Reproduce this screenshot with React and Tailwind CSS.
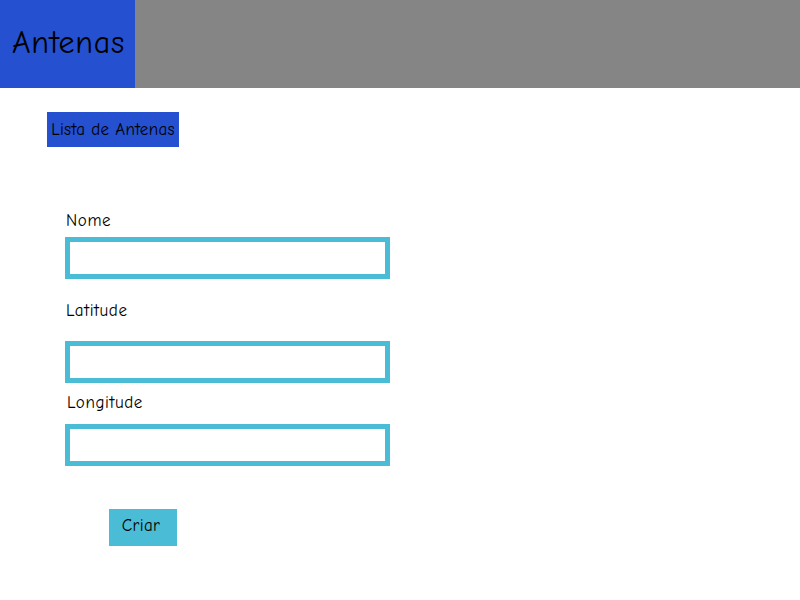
// Antenas - cadastro de antena
import React from 'react'

const font = { fontFamily: '"Comic Sans MS", "Comic Neue", "Noto Sans", sans-serif' }

function Field({ label, labelClass, inputClass }) {
  return (
    <div className="flex flex-col">
      <label className={`text-[17px] leading-[24px] tracking-[0.6px] text-black ${labelClass}`}>{label}</label>
      <input className={`w-[325px] h-[42px] border-[5px] border-[#4bbcd6] bg-white outline-none ${inputClass}`} />
    </div>
  )
}

export default function App() {
  return (
    <div className="w-[800px] h-[600px] bg-white" style={font}>
      <header className="flex h-[88px]">
        <div className="w-[135px] bg-[#2550d0] flex items-center pl-[12px]">
          <h1 className="text-[32px] tracking-[0.7px] text-black pb-[2px]">Antenas</h1>
        </div>
        <div className="flex-1 bg-[#858585]" />
      </header>

      <main className="pl-[47px] pt-[24px]">
        <button className="h-[35px] w-[132px] bg-[#2550d0] text-[17px] tracking-[0.3px] text-black flex items-center justify-center whitespace-nowrap">
          Lista de Antenas
        </button>

        <form className="ml-[18px] mt-[62px] flex flex-col">
          <Field label="Nome" labelClass="ml-[1px]" inputClass="mt-[4px]" />
          <Field label="Latitude" labelClass="mt-[20px] ml-[1px]" inputClass="mt-[18px]" />
          <Field label="Longitude" labelClass="mt-[8px] ml-[2px]" inputClass="mt-[9px]" />
          <button type="button" className="ml-[44px] mt-[43px] w-[68px] h-[37px] bg-[#4bbcd6] text-[17px] tracking-[0.4px] text-black pb-[4px] pr-[4px]">
            Criar
          </button>
        </form>
      </main>
    </div>
  )
}
